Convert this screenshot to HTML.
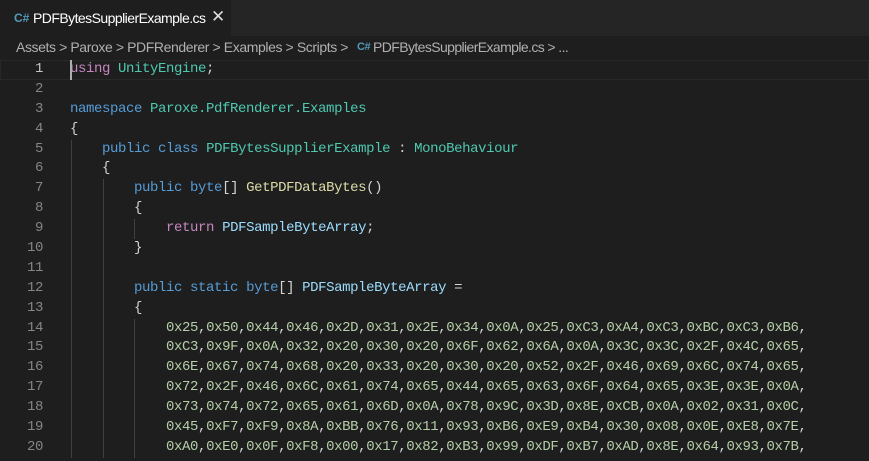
<!DOCTYPE html>
<html><head><meta charset="utf-8"><style>
body{margin:0;width:869px;height:461px;overflow:hidden;background:#1e1e1e;font-family:"Liberation Sans",sans-serif;}
.tabs{height:36px;background:#252526;position:relative}
.tab{position:absolute;left:0;top:0;width:231px;height:36px;background:#1e1e1e;color:#fff;font-size:14px}
.tab .t{position:absolute;left:33px;top:10px;letter-spacing:-0.55px}
.tab .x{position:absolute;left:211px;top:7px;font-size:17px;color:#ddd}
.ic{position:absolute;color:#519aba;font-weight:bold;font-size:12px}
.bc{height:24px;color:#b0b0b0;font-size:14px;position:relative;letter-spacing:-0.4px}
.bc span{position:absolute;top:3px;white-space:pre}
.code{position:absolute;top:60px;left:0;width:869px;font-family:"Liberation Mono",monospace;font-size:14px;letter-spacing:-0.4px}
.l{height:19.9px;line-height:19.9px;position:relative;white-space:pre}
.n{position:absolute;right:826px;color:#858585;text-align:right}
.c{position:absolute;left:70px;color:#d4d4d4}
.g{position:absolute;top:0;width:1px;height:19.9px;background:#404040}
.k{color:#569cd6}.p{color:#c586c0}.ty{color:#4ec9b0}.f{color:#dcdcaa}.v{color:#9cdcfe}.h{color:#b5cea8}
</style></head><body>
<div class="tabs"><div class="tab"><span class="ic" style="left:14px;top:11px">C#</span><span class="t">PDFBytesSupplierExample.cs</span><span class="x">✕</span></div></div>
<div class="bc"><span style="left:16px">Assets &gt; Paroxe &gt; PDFRenderer &gt; Examples &gt; Scripts &gt;</span><span class="ic" style="left:357px;top:5px;font-size:11px">C#</span><span style="left:373px;letter-spacing:-0.6px">PDFBytesSupplierExample.cs &gt; ...</span></div>
<div class="code">
<div class="l" style="outline:1px solid #282828;outline-offset:-1px"><span class="n" style="color:#c6c6c6">1</span><span class="c"><span class="p">using</span> <span class="ty">UnityEngine</span>;</span><span class="g" style="left:70px;width:2px;background:#aeafad"></span></div>
<div class="l"><span class="n">2</span></div>
<div class="l"><span class="n">3</span><span class="c"><span class="k">namespace</span> <span class="ty">Paroxe.PdfRenderer.Examples</span></span></div>
<div class="l"><span class="n">4</span><span class="c">{</span></div>
<div class="l"><span class="n">5</span><span class="g" style="left:71px"></span><span class="c">    <span class="k">public</span> <span class="k">class</span> <span class="ty">PDFBytesSupplierExample</span> : <span class="ty">MonoBehaviour</span></span></div>
<div class="l"><span class="n">6</span><span class="g" style="left:71px"></span><span class="c">    {</span></div>
<div class="l"><span class="n">7</span><span class="g" style="left:71px"></span><span class="g" style="left:103px"></span><span class="c">        <span class="k">public</span> <span class="k">byte</span>[] <span class="f">GetPDFDataBytes</span>()</span></div>
<div class="l"><span class="n">8</span><span class="g" style="left:71px"></span><span class="g" style="left:103px"></span><span class="c">        {</span></div>
<div class="l"><span class="n">9</span><span class="g" style="left:71px"></span><span class="g" style="left:103px"></span><span class="g" style="left:134px"></span><span class="c">            <span class="p">return</span> <span class="v">PDFSampleByteArray</span>;</span></div>
<div class="l"><span class="n">10</span><span class="g" style="left:71px"></span><span class="g" style="left:103px"></span><span class="c">        }</span></div>
<div class="l"><span class="n">11</span><span class="g" style="left:71px"></span><span class="g" style="left:103px"></span></div>
<div class="l"><span class="n">12</span><span class="g" style="left:71px"></span><span class="g" style="left:103px"></span><span class="c">        <span class="k">public</span> <span class="k">static</span> <span class="k">byte</span>[] <span class="v">PDFSampleByteArray</span> =</span></div>
<div class="l"><span class="n">13</span><span class="g" style="left:71px"></span><span class="g" style="left:103px"></span><span class="c">        {</span></div>
<div class="l"><span class="n">14</span><span class="g" style="left:71px"></span><span class="g" style="left:103px"></span><span class="g" style="left:134px"></span><span class="c">            <span class="h">0x25</span>,<span class="h">0x50</span>,<span class="h">0x44</span>,<span class="h">0x46</span>,<span class="h">0x2D</span>,<span class="h">0x31</span>,<span class="h">0x2E</span>,<span class="h">0x34</span>,<span class="h">0x0A</span>,<span class="h">0x25</span>,<span class="h">0xC3</span>,<span class="h">0xA4</span>,<span class="h">0xC3</span>,<span class="h">0xBC</span>,<span class="h">0xC3</span>,<span class="h">0xB6</span>,</span></div>
<div class="l"><span class="n">15</span><span class="g" style="left:71px"></span><span class="g" style="left:103px"></span><span class="g" style="left:134px"></span><span class="c">            <span class="h">0xC3</span>,<span class="h">0x9F</span>,<span class="h">0x0A</span>,<span class="h">0x32</span>,<span class="h">0x20</span>,<span class="h">0x30</span>,<span class="h">0x20</span>,<span class="h">0x6F</span>,<span class="h">0x62</span>,<span class="h">0x6A</span>,<span class="h">0x0A</span>,<span class="h">0x3C</span>,<span class="h">0x3C</span>,<span class="h">0x2F</span>,<span class="h">0x4C</span>,<span class="h">0x65</span>,</span></div>
<div class="l"><span class="n">16</span><span class="g" style="left:71px"></span><span class="g" style="left:103px"></span><span class="g" style="left:134px"></span><span class="c">            <span class="h">0x6E</span>,<span class="h">0x67</span>,<span class="h">0x74</span>,<span class="h">0x68</span>,<span class="h">0x20</span>,<span class="h">0x33</span>,<span class="h">0x20</span>,<span class="h">0x30</span>,<span class="h">0x20</span>,<span class="h">0x52</span>,<span class="h">0x2F</span>,<span class="h">0x46</span>,<span class="h">0x69</span>,<span class="h">0x6C</span>,<span class="h">0x74</span>,<span class="h">0x65</span>,</span></div>
<div class="l"><span class="n">17</span><span class="g" style="left:71px"></span><span class="g" style="left:103px"></span><span class="g" style="left:134px"></span><span class="c">            <span class="h">0x72</span>,<span class="h">0x2F</span>,<span class="h">0x46</span>,<span class="h">0x6C</span>,<span class="h">0x61</span>,<span class="h">0x74</span>,<span class="h">0x65</span>,<span class="h">0x44</span>,<span class="h">0x65</span>,<span class="h">0x63</span>,<span class="h">0x6F</span>,<span class="h">0x64</span>,<span class="h">0x65</span>,<span class="h">0x3E</span>,<span class="h">0x3E</span>,<span class="h">0x0A</span>,</span></div>
<div class="l"><span class="n">18</span><span class="g" style="left:71px"></span><span class="g" style="left:103px"></span><span class="g" style="left:134px"></span><span class="c">            <span class="h">0x73</span>,<span class="h">0x74</span>,<span class="h">0x72</span>,<span class="h">0x65</span>,<span class="h">0x61</span>,<span class="h">0x6D</span>,<span class="h">0x0A</span>,<span class="h">0x78</span>,<span class="h">0x9C</span>,<span class="h">0x3D</span>,<span class="h">0x8E</span>,<span class="h">0xCB</span>,<span class="h">0x0A</span>,<span class="h">0x02</span>,<span class="h">0x31</span>,<span class="h">0x0C</span>,</span></div>
<div class="l"><span class="n">19</span><span class="g" style="left:71px"></span><span class="g" style="left:103px"></span><span class="g" style="left:134px"></span><span class="c">            <span class="h">0x45</span>,<span class="h">0xF7</span>,<span class="h">0xF9</span>,<span class="h">0x8A</span>,<span class="h">0xBB</span>,<span class="h">0x76</span>,<span class="h">0x11</span>,<span class="h">0x93</span>,<span class="h">0xB6</span>,<span class="h">0xE9</span>,<span class="h">0xB4</span>,<span class="h">0x30</span>,<span class="h">0x08</span>,<span class="h">0x0E</span>,<span class="h">0xE8</span>,<span class="h">0x7E</span>,</span></div>
<div class="l"><span class="n">20</span><span class="g" style="left:71px"></span><span class="g" style="left:103px"></span><span class="g" style="left:134px"></span><span class="c">            <span class="h">0xA0</span>,<span class="h">0xE0</span>,<span class="h">0x0F</span>,<span class="h">0xF8</span>,<span class="h">0x00</span>,<span class="h">0x17</span>,<span class="h">0x82</span>,<span class="h">0xB3</span>,<span class="h">0x99</span>,<span class="h">0xDF</span>,<span class="h">0xB7</span>,<span class="h">0xAD</span>,<span class="h">0x8E</span>,<span class="h">0x64</span>,<span class="h">0x93</span>,<span class="h">0x7B</span>,</span></div>
</div>
</body></html>
